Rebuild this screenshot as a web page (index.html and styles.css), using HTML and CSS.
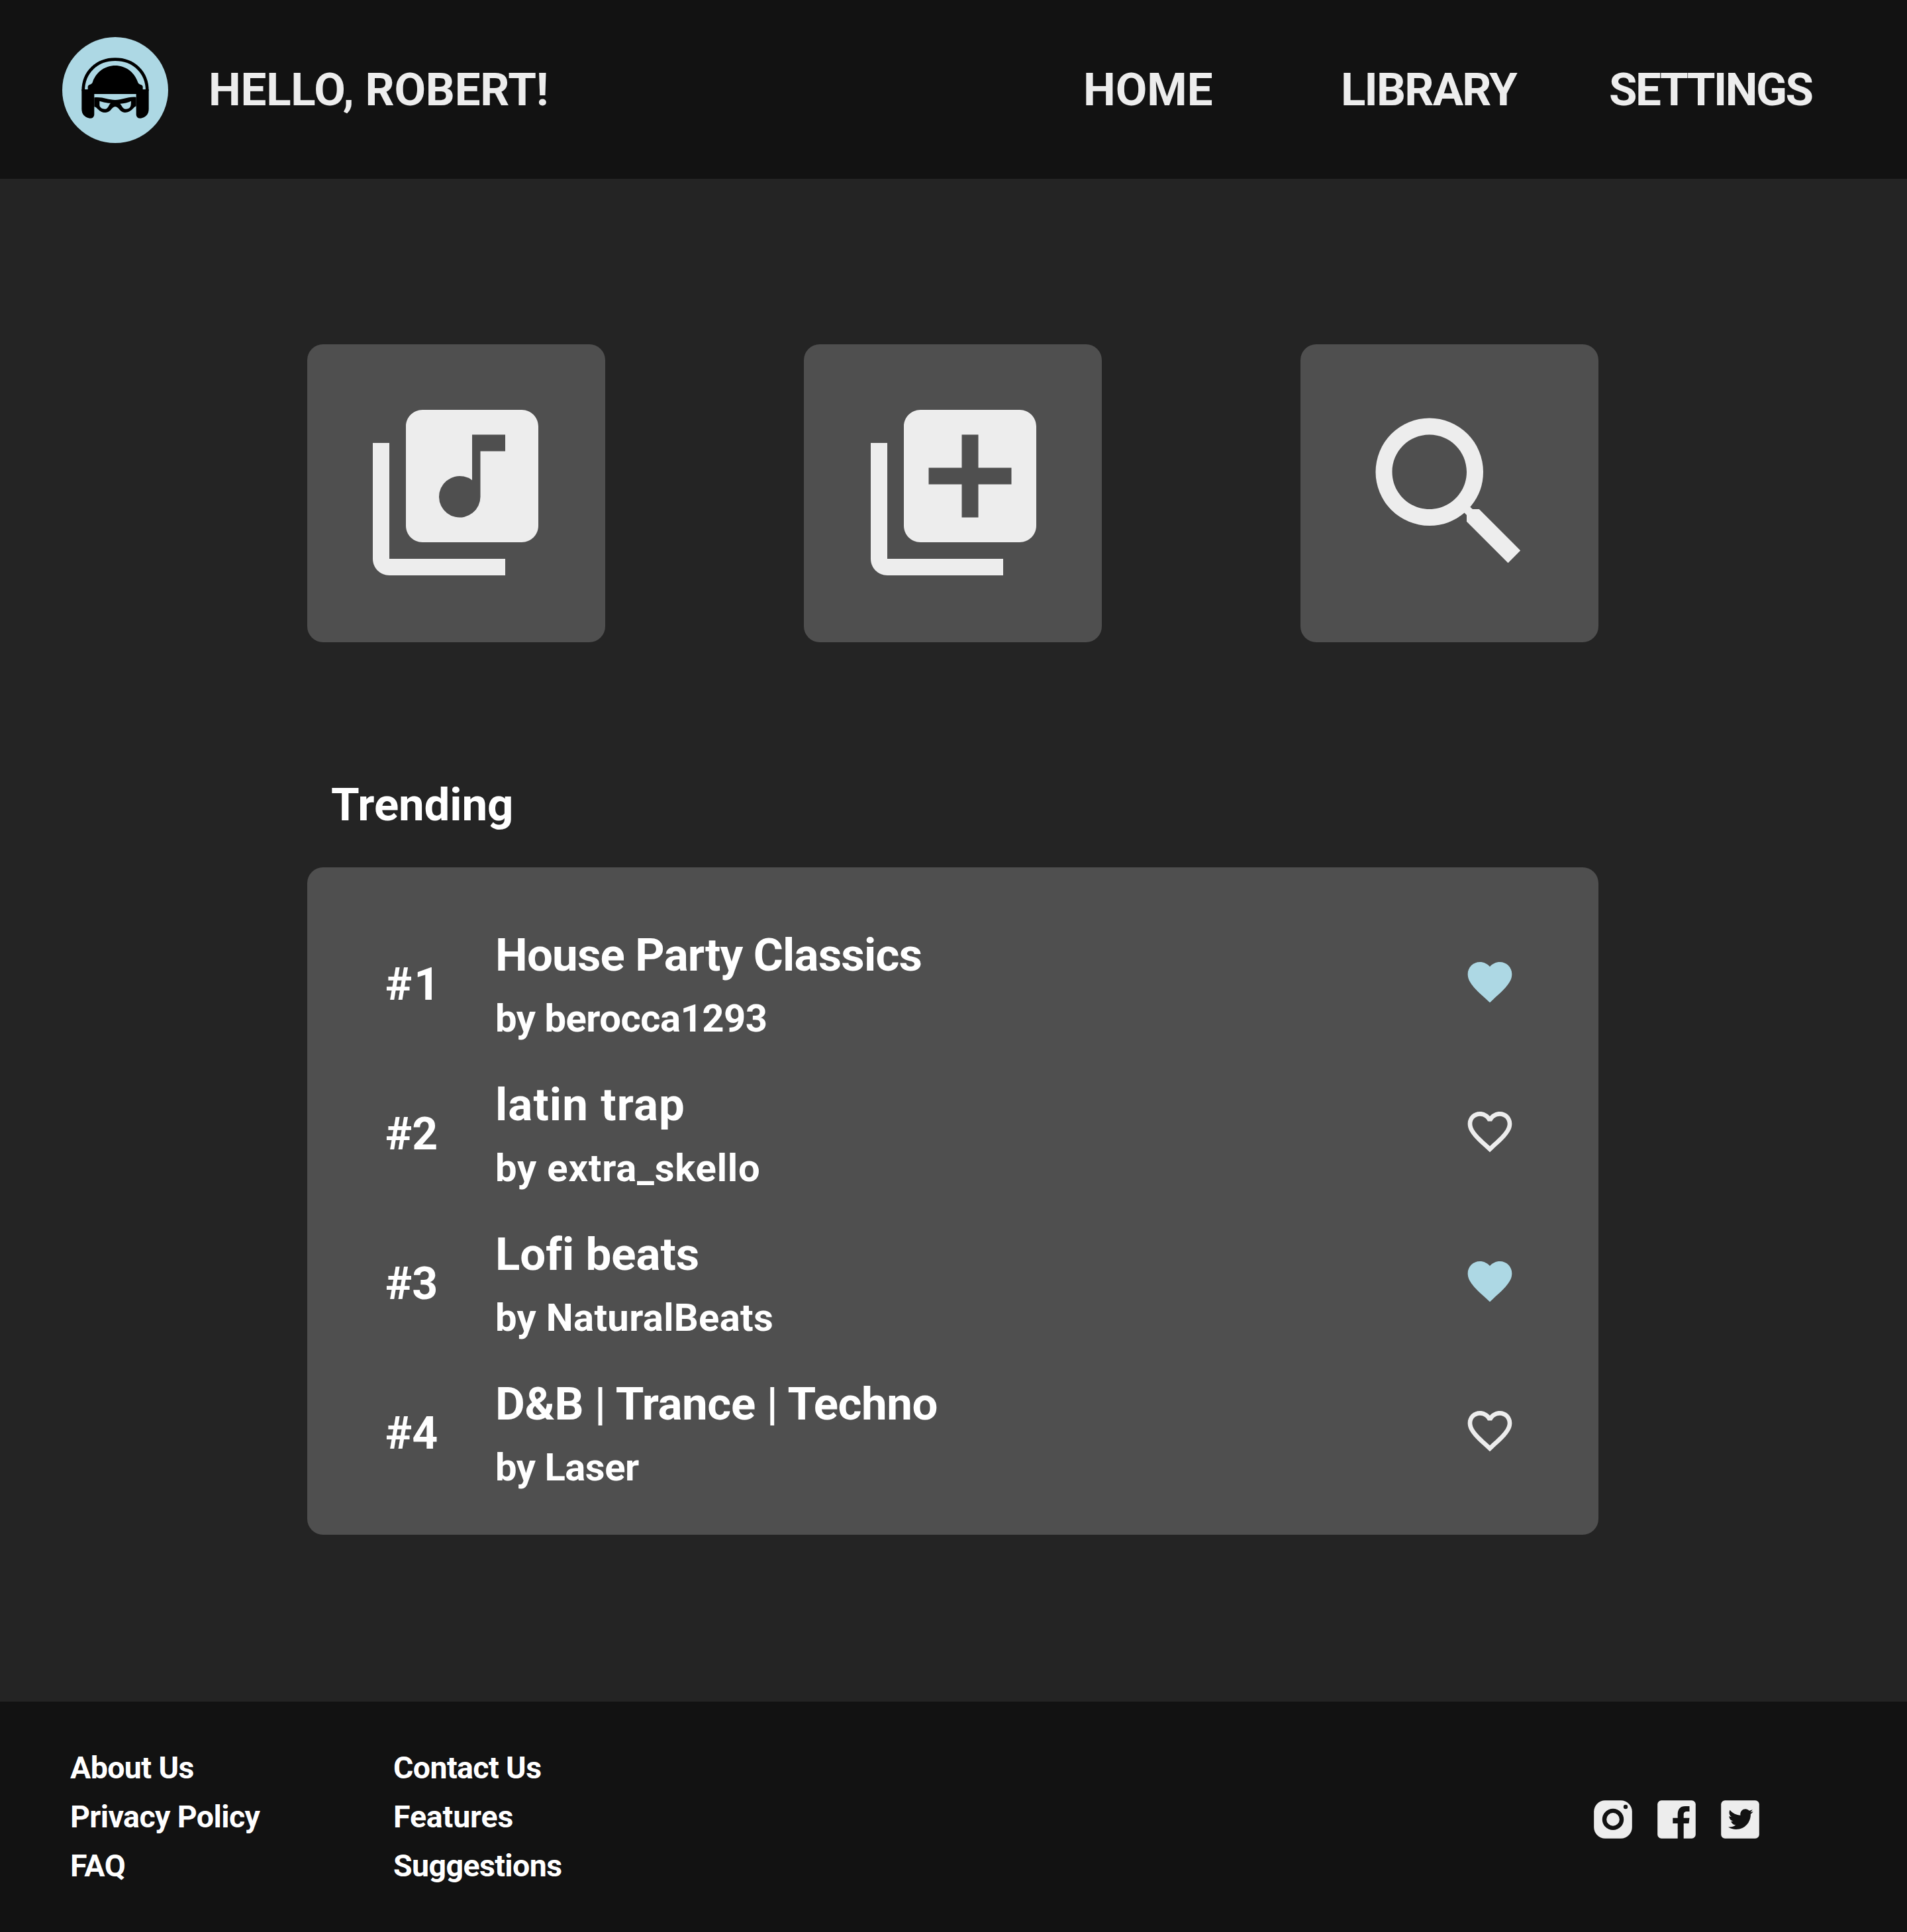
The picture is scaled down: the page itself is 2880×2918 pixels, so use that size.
FILE: index.html
```html
<!DOCTYPE html>
<html lang="en">
<head>
<meta charset="utf-8">
<title>Home</title>
<link rel="stylesheet" href="styles.css">
</head>
<body>
<header class="header">
  <svg class="avatar" viewBox="42 48 480 480" aria-hidden="true">
    <circle class="avatar-bg" cx="282" cy="288" r="240"/>
    <path class="avatar-band" d="M137 292C137 206 200 149 282 149S427 206 427 292"/>
    <path d="M158 306V273c0-6 5-8 9-10 6-2 10-4 13-12 16-46 57-74 102-74s86 28 102 74c3 8 7 10 13 12 5 2 10 4 10 10v33z"/>
    <path d="M130 285H187V398q0 18-20 18Q130 408 130 374z"/>
    <path d="M434 285H377V398q0 18 20 18Q434 408 434 374z"/>
    <path fill-rule="evenodd" d="M187 322C225 318 250 333 282 333S340 316 377 320V361C364 364 357 390 326 390 303 390 298 363 282 363S263 390 237 390C207 390 204 367 187 363zM211 338V357C213 369 224 374 236 374 249 374 252 357 261 347 240 347 226 341 211 338zM354 338C340 345 322 348 304 350 313 359 316 374 330 374 343 374 351 369 353 355z"/>
  </svg>
  <h1 class="greeting">HELLO, ROBERT!</h1>
  <nav class="nav">
    <a class="nav-link">HOME</a>
    <a class="nav-link nav-library">LIBRARY</a>
    <a class="nav-link nav-settings">SETTINGS</a>
  </nav>
</header>

<main class="main">
  <section class="cards">
    <a class="card card-library"><svg class="card-icon" viewBox="0 0 24 24"><path d="M20 2H8c-1.100 0-2 .9-2 2v12c0 1.100.9 2 2 2h12c1.100 0 2-.9 2-2V4c0-1.100-.9-2-2-2zm-2 5h-3v5.500a2.500 2.500 0 1 1-1-2V5h4v2zM4 6H2v14c0 1.100.9 2 2 2h14v-2H4V6z"/></svg></a>
    <a class="card"><svg class="card-icon" viewBox="0 0 24 24"><path d="M4 6H2v14c0 1.100.9 2 2 2h14v-2H4V6zm16-4H8c-1.100 0-2 .9-2 2v12c0 1.100.9 2 2 2h12c1.100 0 2-.9 2-2V4c0-1.100-.9-2-2-2zm-1 9h-4v4h-2v-4H9V9h4V5h2v4h4v2z"/></svg></a>
    <a class="card"><svg class="card-icon" viewBox="0 0 24 24"><path d="M15.500 14h-.79l-.28-.27A6.471 6.471 0 0 0 16 9.500 6.500 6.500 0 1 0 9.500 16c1.610 0 3.090-.59 4.230-1.570l.27.28v.79l5 4.990L20.490 19l-4.990-5zm-6 0C7.010 14 5 11.990 5 9.500S7.010 5 9.500 5 14 7.010 14 9.500 11.990 14 9.500 14z"/></svg></a>
  </section>

  <h2 class="section-title">Trending</h2>
  <ol class="trending">
    <li class="row">
      <span class="rank rank-first">#1</span>
      <div class="info"><div class="name name-tight">House Party Classics</div><div class="author author-tight">by berocca1293</div></div>
      <svg class="heart heart-on" viewBox="0 0 24 24"><path d="M12 21.350l-1.450-1.320C5.400 15.360 2 12.280 2 8.500 2 5.420 4.420 3 7.500 3c1.740 0 3.410.81 4.500 2.090C13.090 3.810 14.760 3 16.500 3 19.580 3 22 5.420 22 8.500c0 3.780-3.400 6.860-8.550 11.540L12 21.350z"/></svg>
    </li>
    <li class="row">
      <span class="rank">#2</span>
      <div class="info"><div class="name name-loose">latin trap</div><div class="author author-loose">by extra_skello</div></div>
      <svg class="heart" viewBox="0 0 24 24"><path d="M16.500 3c-1.740 0-3.410.81-4.500 2.090C10.910 3.810 9.240 3 7.500 3 4.420 3 2 5.420 2 8.500c0 3.780 3.400 6.860 8.550 11.540L12 21.350l1.450-1.320C18.600 15.360 22 12.280 22 8.500 22 5.420 19.580 3 16.500 3zm-4.400 15.550l-.1.100-.1-.1C7.140 14.240 4 11.390 4 8.500 4 6.500 5.500 5 7.500 5c1.540 0 3.040.99 3.570 2.360h1.870C13.460 5.990 14.960 5 16.500 5c2 0 3.500 1.500 3.500 3.500 0 2.890-3.140 5.740-7.900 10.050z"/></svg>
    </li>
    <li class="row">
      <span class="rank">#3</span>
      <div class="info"><div class="name">Lofi beats</div><div class="author">by NaturalBeats</div></div>
      <svg class="heart heart-on" viewBox="0 0 24 24"><path d="M12 21.350l-1.450-1.320C5.400 15.360 2 12.280 2 8.500 2 5.420 4.420 3 7.500 3c1.740 0 3.410.81 4.500 2.090C13.090 3.810 14.760 3 16.500 3 19.580 3 22 5.420 22 8.500c0 3.780-3.400 6.860-8.550 11.540L12 21.350z"/></svg>
    </li>
    <li class="row">
      <span class="rank">#4</span>
      <div class="info"><div class="name name-snug">D&amp;B | Trance | Techno</div><div class="author author-tight">by Laser</div></div>
      <svg class="heart" viewBox="0 0 24 24"><path d="M16.500 3c-1.740 0-3.410.81-4.500 2.090C10.910 3.810 9.240 3 7.500 3 4.420 3 2 5.420 2 8.500c0 3.780 3.400 6.860 8.550 11.540L12 21.350l1.450-1.320C18.600 15.360 22 12.280 22 8.500 22 5.420 19.580 3 16.500 3zm-4.400 15.550l-.1.100-.1-.1C7.140 14.240 4 11.390 4 8.500 4 6.500 5.500 5 7.500 5c1.540 0 3.040.99 3.570 2.360h1.870C13.460 5.990 14.960 5 16.500 5c2 0 3.500 1.500 3.500 3.500 0 2.890-3.140 5.740-7.900 10.050z"/></svg>
    </li>
  </ol>
</main>

<footer class="footer">
  <div class="links">
    <a>About Us</a>
    <a>Privacy Policy</a>
    <a class="link-even">FAQ</a>
  </div>
  <div class="links">
    <a>Contact Us</a>
    <a class="link-even">Features</a>
    <a>Suggestions</a>
  </div>
  <div class="social">
    <svg class="social-icon" viewBox="0 0 58 58"><rect x=".2" y=".2" width="57.600" height="57.600" rx="17"/><circle class="ring" cx="29" cy="28.900" r="13"/><circle class="cut" cx="48" cy="10" r="3.200"/></svg>
    <svg class="social-icon" viewBox="0 0 58 58"><rect x=".2" y=".2" width="57.600" height="57.600" rx="6"/><path class="cut" d="M30.700 58V35H23.300V26.700H30.700V21.500C30.700 13 35 9 42 9H48.500V17H45C41 17 39.700 18.500 39.700 22V26.700H48.500L47.500 35H39.700V58z"/></svg>
    <svg class="social-icon" viewBox="0 0 58 58"><rect x=".2" y=".2" width="57.600" height="57.600" rx="6"/><path class="cut" transform="translate(11 9.800) scale(1.571)" d="M23.954 4.569c-.885.389-1.830.654-2.825.775 1.014-.611 1.794-1.574 2.163-2.723-.951.555-2.005.959-3.127 1.184-.896-.959-2.173-1.559-3.591-1.559-2.717 0-4.920 2.203-4.920 4.917 0 .39.045.765.127 1.124C7.691 8.094 4.066 6.130 1.640 3.161c-.427.722-.666 1.561-.666 2.475 0 1.710.87 3.213 2.188 4.096-.807-.026-1.566-.248-2.228-.616v.061c0 2.385 1.693 4.374 3.946 4.827-.413.111-.849.171-1.296.171-.314 0-.615-.03-.916-.086.631 1.953 2.445 3.377 4.604 3.417-1.680 1.319-3.809 2.105-6.102 2.105-.39 0-.779-.023-1.170-.067 2.189 1.394 4.768 2.209 7.557 2.209 9.054 0 13.999-7.496 13.999-13.986 0-.209 0-.42-.015-.63.961-.689 1.800-1.560 2.460-2.548z"/></svg>
  </div>
</footer>
</body>
</html>
```
FILE: styles.css
```css
* { box-sizing: border-box; }

body {
  margin: 0;
  background: #242424;
  color: #fff;
  font-family: Roboto, "Liberation Sans", sans-serif;
  font-weight: 700;
  font-variant-ligatures: none;
}

h1, h2, ol { margin: 0; padding: 0; }
svg { display: block; flex: none; }

/* Header */
.header {
  display: flex;
  align-items: center;
  height: 270px;
  padding: 2px 0 0 94px;
  background: #121212;
  color: #ededed;
}
.avatar { width: 160px; height: 160px; }
.avatar-bg { fill: #add8e4; }
.avatar-band { fill: none; stroke: #000; stroke-width: 14; }
.greeting {
  margin-left: 61px;
  font-size: 69px;
  line-height: 80px;
  letter-spacing: -0.2px;
  white-space: nowrap;
}
.nav {
  display: grid;
  grid-template-columns: 389px 405px 320px;
  margin: 0 130px 0 auto;
  font-size: 69px;
  line-height: 80px;
}
.nav-library { letter-spacing: -1.78px; }
.nav-settings { letter-spacing: -2.5px; }

/* Main */
.main {
  height: 2300px;
  padding: 250px 466px 0 464px;
}
.cards { display: flex; gap: 300px; }
.card {
  width: 450px;
  height: 450px;
  padding: 74px 0 0 76px;
  border-radius: 24px;
  background: #4f4f4f;
}
.card-library { padding-left: 74px; }
.card-icon { width: 300px; height: 300px; fill: #ededed; }

.section-title {
  margin: 206px 0 54px 36px;
  font-size: 69px;
  line-height: 80px;
  letter-spacing: -0.1px;
}

.trending {
  height: 1008px;
  padding: 66px 124px 0 118px;
  border-radius: 24px;
  background: #4f4f4f;
  list-style: none;
}
.row {
  display: flex;
  align-items: center;
  height: 226px;
}
.rank {
  width: 166px;
  margin-bottom: 4px;
  font-size: 68px;
  line-height: 80px;
}
.rank-first { letter-spacing: 3px; }
.info { flex: 1; white-space: nowrap; }
.name { font-size: 69px; line-height: 98px; }
.name-tight { letter-spacing: -0.8px; }
.name-snug { letter-spacing: -0.4px; }
.name-loose { letter-spacing: 1.1px; }
.author { font-size: 58px; line-height: 92px; letter-spacing: 0.31px; }
.author-tight { letter-spacing: -0.5px; }
.author-loose { letter-spacing: 0.8px; }
.heart { width: 80px; height: 80px; margin-bottom: 12px; fill: #ededed; }
.heart-on { fill: #add8e4; }

/* Footer */
.footer {
  display: flex;
  height: 348px;
  padding: 63px 223px 0 106px;
  background: #121212;
}
.links {
  display: flex;
  flex-direction: column;
  width: 488px;
  font-size: 46.5px;
  line-height: 74px;
  letter-spacing: -0.6px;
}
.link-even { letter-spacing: -0.15px; }
.social { display: flex; gap: 38px; margin: 86px 0 0 auto; }
.social-icon { width: 58px; height: 58px; fill: #ededed; }
.social-icon .cut { fill: #121212; }
.social-icon .ring { fill: none; stroke: #121212; stroke-width: 6.4; }
```
